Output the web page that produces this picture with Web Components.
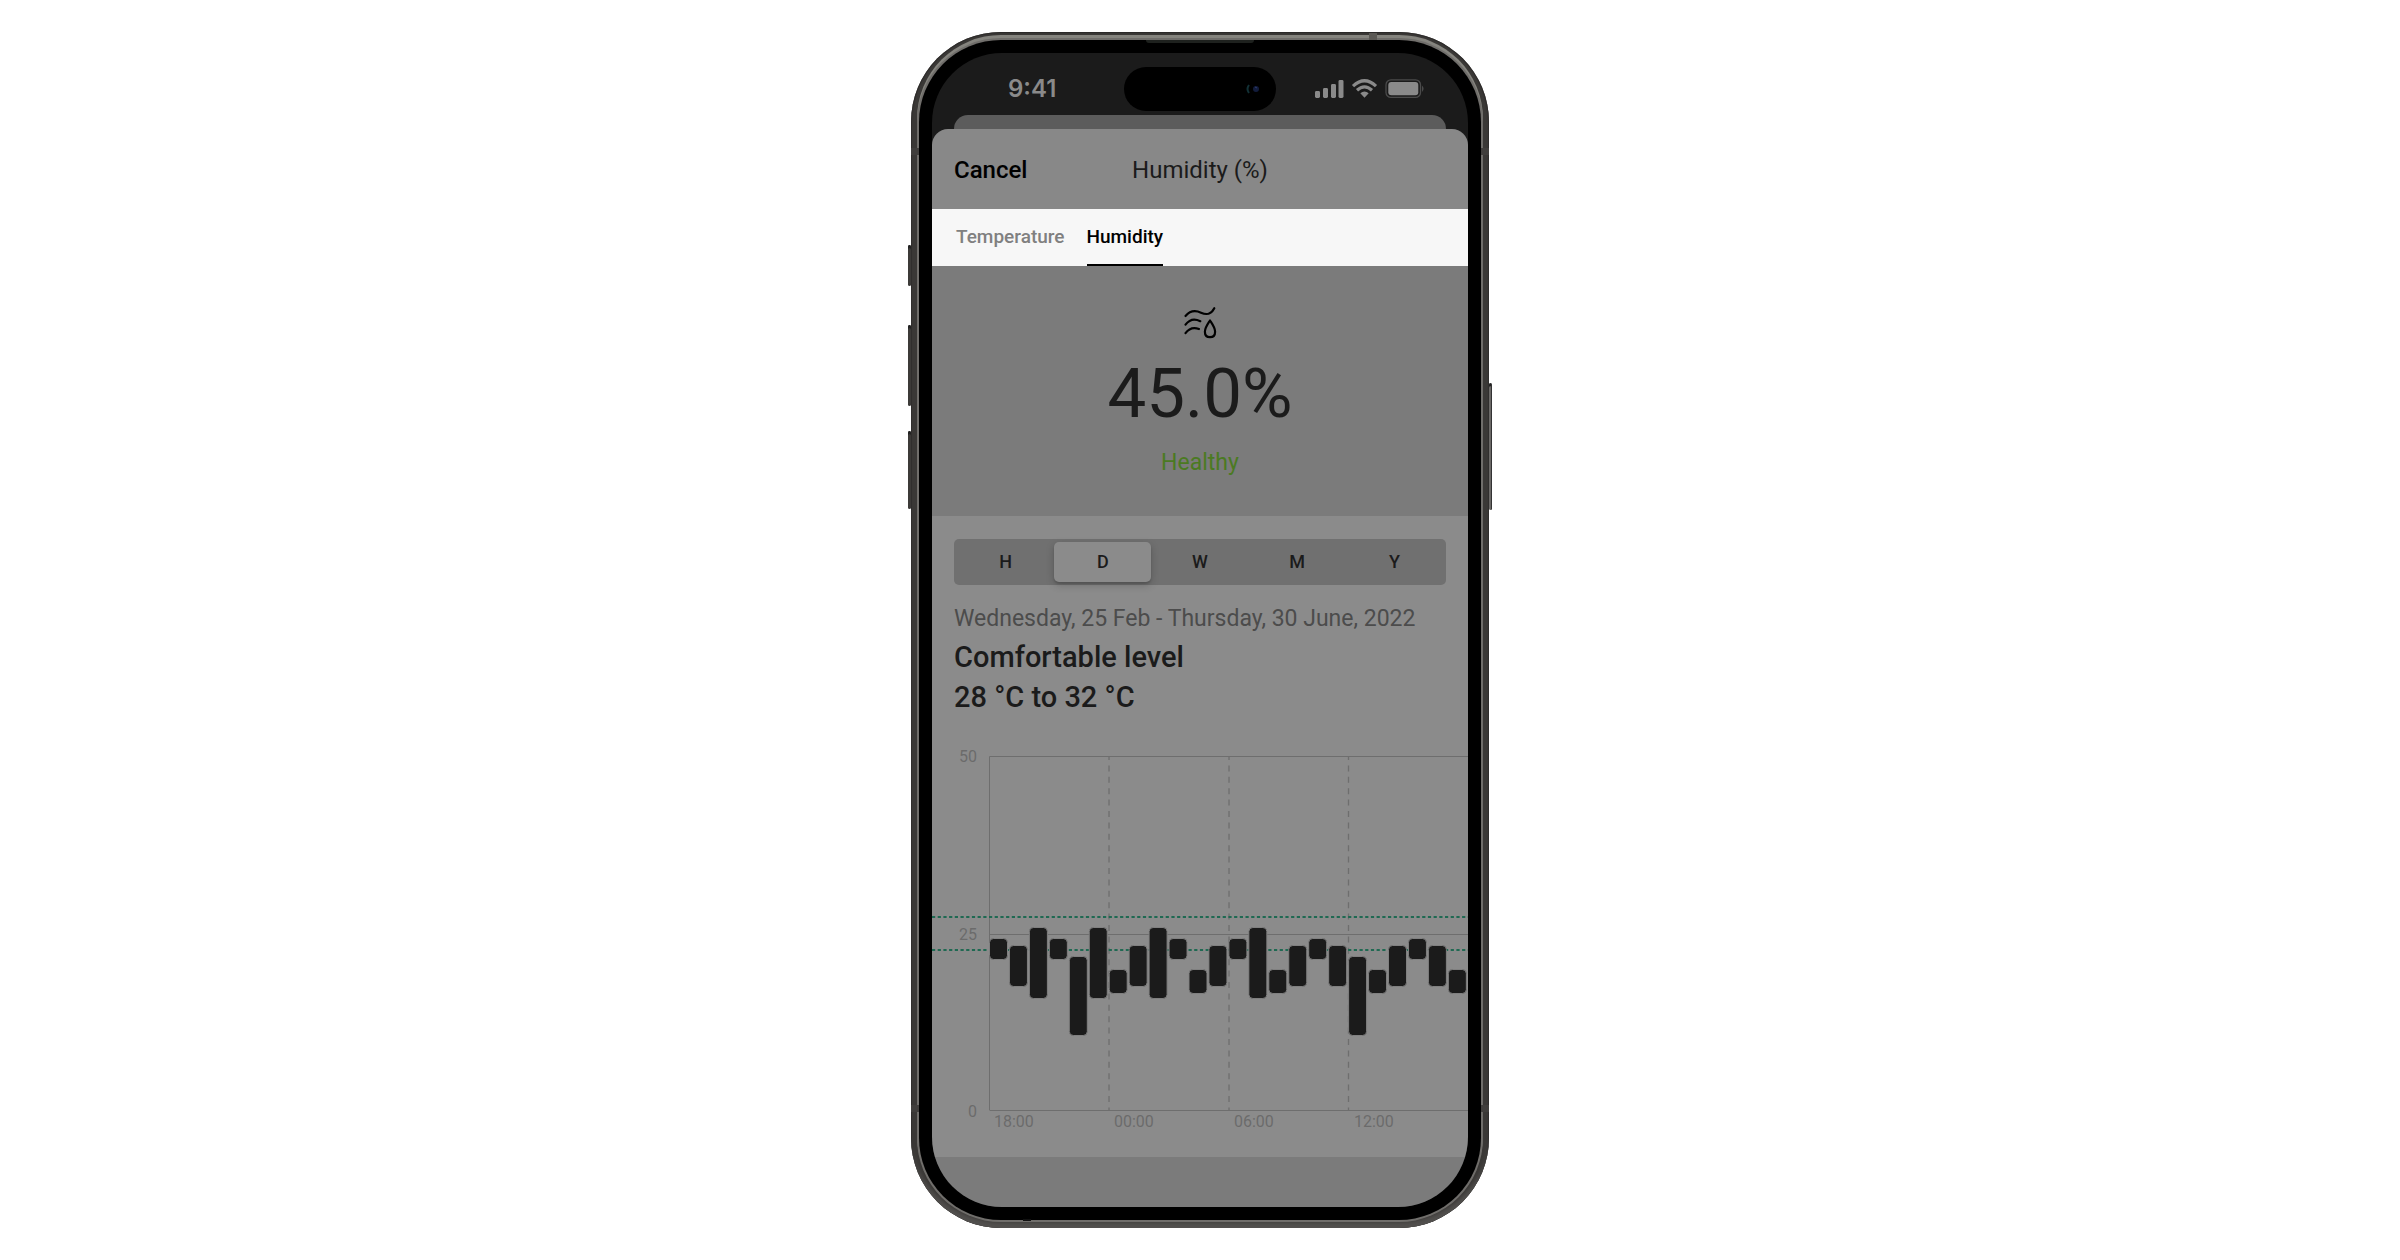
<!DOCTYPE html>
<html lang="en">
<head>
<meta charset="utf-8">
<title>Humidity</title>
<style>
  body { margin: 0; background: #fff; font-family: Roboto, "Liberation Sans", sans-serif; color: #1b1b1b; }
</style>
</head>
<body>
<climate-app></climate-app>
<script>
const define = (name, html, setup) => customElements.define(name, class extends HTMLElement {
  connectedCallback() {
    if (this.shadowRoot) return;
    const root = this.attachShadow({ mode: 'open' });
    root.innerHTML = html;
    if (setup) setup(this, root);
  }
});

define('status-bar', `
<style>
  :host { display: grid; grid-template-columns: 1fr 152px 1fr; align-items: center; height: 72px; padding: 0 42px; color: #8a8a8a; box-sizing: border-box; }
  time { display: block; padding-left: 34px; font: 600 24px/28px Inter, sans-serif; }
  .island { height: 44px; border-radius: 22px; background: #000; display: flex; justify-content: flex-end; align-items: center; padding: 0 16px; box-sizing: border-box; }
  svg { display: block; }
  .icons { justify-self: end; }
</style>
<time>9:41</time>
<div class="island"><svg width="14" height="10" viewBox="0 0 14 10"><path d="M3 1Q0 5 3 9" fill="none" stroke="#123136" stroke-width="2"/><circle cx="10" cy="5" r="3" fill="#121c3c"/><path d="M9 3l2 1" stroke="#303c72"/></svg></div>
<svg class="icons" width="112" height="20" viewBox="0 0 112 20" fill="currentColor">
  <rect x="1" y="12" width="5" height="7" rx="1.4"/><rect x="9" y="9" width="5" height="10" rx="1.4"/><rect x="17" y="5" width="5" height="14" rx="1.4"/><rect x="24.500" y="1" width="5" height="18" rx="1.4"/>
  <g fill="none" stroke="currentColor" stroke-width="3.200"><path d="M39 7.200Q50.500-3.600 62 7.200"/><path d="M43 11.300Q50.500 4.500 58 11.300"/></g>
  <path d="M46.300 14.200Q50.500 10.600 54.700 14.200L50.500 18.800z"/>
  <rect x="72" y=".8" width="34.500" height="17.600" rx="5" fill="none" stroke="#4b4b4b" stroke-width="1.300"/><rect x="74.300" y="3" width="30" height="13.200" rx="3"/><path d="M108 6.500q3.200 3.200 0 6.400z" fill="#4b4b4b"/>
</svg>`);

define('sheet-header', `
<style>
  :host { display: grid; grid-template-columns: 1fr auto 1fr; align-items: center; height: 80px; padding: 1px 22px 0; background: #888; border-radius: 16px 16px 0 0; box-sizing: border-box; }
  button { justify-self: start; border: 0; padding: 0; background: none; color: #000; font: 500 24px/28px Roboto, sans-serif; }
  h1 { margin: 0; font-size: 24px; line-height: 28px; font-weight: 400; }
</style>
<button type="button">Cancel</button><h1><slot></slot></h1>`);

define('tab-bar', `
<style>
  :host { display: flex; gap: 22px; height: 57px; padding: 0 24px; background: #f7f7f7; box-sizing: border-box; }
  button { border: 0; border-bottom: 2px solid transparent; padding: 0; background: none; color: #808080; font: 500 19px/24px Roboto, sans-serif; }
  button[aria-selected=true] { color: #000; border-color: #000; }
</style>
<button type="button" role="tab" aria-selected="false">Temperature</button><button type="button" role="tab" aria-selected="true">Humidity</button>`,
(host) => host.setAttribute('role', 'tablist'));

define('reading-panel', `
<style>
  :host { display: flex; flex-direction: column; align-items: center; height: 250px; padding-top: 40px; background: #7b7b7b; box-sizing: border-box; }
  svg { display: block; }
  strong { font-size: 69px; line-height: 80px; font-weight: 400; margin-top: 12px; }
  span { font-size: 23px; line-height: 28px; color: #4b7a22; margin-top: 15px; }
</style>
<svg width="36" height="36" viewBox="0 0 36 36" fill="none" stroke="#000" stroke-width="2.200" stroke-linecap="round" stroke-linejoin="round">
  <path d="M3.500 10C9 3.500 14.500 4.600 19 6.700C25 9.400 29 8.500 32.300 2.200M3.500 18.700C8 12.600 13 12.500 18.300 15.200M3.500 27.200C7.500 21.600 12 21.200 17 23M28 14.500C25.300 18.600 22.900 21.900 22.900 25.700C22.900 29.200 25.100 31.200 28 31.200C30.900 31.200 33.100 29.200 33.100 25.700C33.100 21.900 30.700 18.600 28 14.500Z"/>
</svg>
<strong>45.0%</strong><span>Healthy</span>`);

define('range-picker', `
<style>
  :host { display: flex; height: 46px; padding: 3px; background: #707070; border-radius: 5px; box-sizing: border-box; }
  button { flex: 1 1 0; border: 0; padding: 0; border-radius: 5px; background: none; color: #1b1b1b; font: 500 18px/24px Roboto, sans-serif; }
  button[aria-pressed=true] { background: #8b8b8b; box-shadow: 0 3px 8px #0003, 0 2px 2px #0002; }
</style>`, (host, root) => {
  for (const key of ['H', 'D', 'W', 'M', 'Y']) {
    const button = document.createElement('button');
    button.type = 'button';
    button.textContent = key;
    button.setAttribute('aria-pressed', key === 'D');
    root.append(button);
  }
  host.setAttribute('role', 'group');
});

define('range-summary', `
<style>
  :host { display: block; }
  p { margin: 0; font-size: 23px; line-height: 28px; color: #4c4c4c; }
  h2 { margin: 4px 0 0; font-size: 29px; line-height: 40px; font-weight: 500; }
</style>
<p>Wednesday, 25 Feb - Thursday, 30 June, 2022</p>
<h2>Comfortable level<br>28 °C to 32 °C</h2>`);

define('humidity-chart', `
<style>
  :host { display: block; }
  svg { display: block; width: 100%; }
  text { font-size: 16px; fill: #6b6b6b; }
</style>
<svg viewBox="0 -12 536 420">
  <g fill="none" stroke="#6e6e6e">
    <path d="M57.500 361V7.500H536M57.500 185.500H536M57.500 361.500H536"/>
    <path d="M177 8V361M297 8V361M416.500 8V361" stroke-dasharray="6 5.400" stroke-dashoffset="3" stroke-width="1.300"/>
  </g>
  <path d="M0 168H536M0 201H536" stroke="#1f6952" stroke-width="1.800" stroke-dasharray="3.200 2.500"/>
  <g id="bars" fill="#1b1b1b" stroke="#808080" stroke-width="1"></g>
  <g text-anchor="end"><text x="45" y="13">50</text><text x="45" y="191">25</text><text x="45" y="368">0</text></g>
  <text x="62" y="378">18:00</text><text x="182" y="378">00:00</text><text x="302" y="378">06:00</text><text x="422" y="378">12:00</text>
</svg>`, (host, root) => {
  const spans = { a: [190, 210], b: [197, 237], c: [179, 249], d: [208, 286], e: [221, 244] };
  const bars = root.getElementById('bars');
  [...'abcadcebcaebacebabdebabe'].forEach((kind, i) => {
    const [top, bottom] = spans[kind];
    const rect = document.createElementNS('http://www.w3.org/2000/svg', 'rect');
    const box = { x: 57.5 + i * 19.95, y: top - 0.5, width: 18, height: bottom - top + 1, rx: 4 };
    for (const name in box) rect.setAttribute(name, box[name]);
    bars.append(rect);
  });
});

define('phone-frame', `
<style>
  :host { display: block; position: relative; width: 578px; border-radius: 90px; }
  .body { position: relative; padding: 8px; border-radius: 90px; background: #3a3836; box-shadow: inset 0 -8px 4px -2px #52504e, inset 0 0 1px 1px #2c2a29; }
  .lip { border-radius: 82px; padding: 13px; background: #000; box-shadow: 0 0 0 2px #706e6b, 0 -3px 0 2px #85847e; }
  .screen { border-radius: 70px; overflow: hidden; background: #1b1b1b; }
  .key { position: absolute; width: 3px; background: #3c3a38; border-radius: 2px; box-shadow: inset 0 3px #222; }
  .left { left: -3px; } .right { right: -3px; background: #6b6967; border-right: 1px solid #333; width: 2px; }
  .k1 { top: 213px; height: 41px; } .k2 { top: 293px; height: 81px; } .k3 { top: 399px; height: 78px; } .k4 { top: 351px; height: 127px; }
  .band { position: absolute; background: #403e3c; }
  .b1 { left: 0; top: 116px; width: 8px; height: 7px; } .b2 { right: 0; top: 116px; width: 8px; height: 7px; }
  .b3 { left: 0; bottom: 116px; width: 8px; height: 7px; } .b4 { right: 0; bottom: 116px; width: 8px; height: 7px; }
  .b5 { right: 112px; top: 1px; width: 8px; height: 7px; background: #5b5955; }
  .b6 { left: 112px; bottom: 7px; width: 8px; height: 2px; background: #111; }
  .ear { position: absolute; left: 235px; right: 235px; top: 8px; height: 3px; border-radius: 0 0 3px 3px; background: #1e211e; }
</style>
<i class="key left k1"></i><i class="key left k2"></i><i class="key left k3"></i><i class="key right k4"></i>
<div class="body">
  <div class="lip"><div class="screen"><slot></slot></div></div>
  <i class="ear"></i><i class="band b1"></i><i class="band b2"></i><i class="band b3"></i><i class="band b4"></i><i class="band b5"></i><i class="band b6"></i>
</div>`);

define('climate-app', `
<style>
  :host { display: flex; justify-content: center; padding: 32px 0; }
  .behind { height: 14px; margin: -10px 22px 0; background: #5c5c5c; border-radius: 14px 14px 0 0; }
  .content { background: #8b8b8b; padding-top: 23px; }
  .inset { display: flex; flex-direction: column; gap: 20px; padding: 0 22px; }
  humidity-chart { margin-top: 20px; }
  footer { height: 50px; background: #7b7b7b; }
</style>
<phone-frame>
  <status-bar></status-bar>
  <div class="behind"></div>
  <sheet-header>Humidity (%)</sheet-header>
  <tab-bar></tab-bar>
  <reading-panel></reading-panel>
  <div class="content">
    <div class="inset"><range-picker></range-picker><range-summary></range-summary></div>
    <humidity-chart></humidity-chart>
  </div>
  <footer></footer>
</phone-frame>`);
</script>
</body>
</html>
